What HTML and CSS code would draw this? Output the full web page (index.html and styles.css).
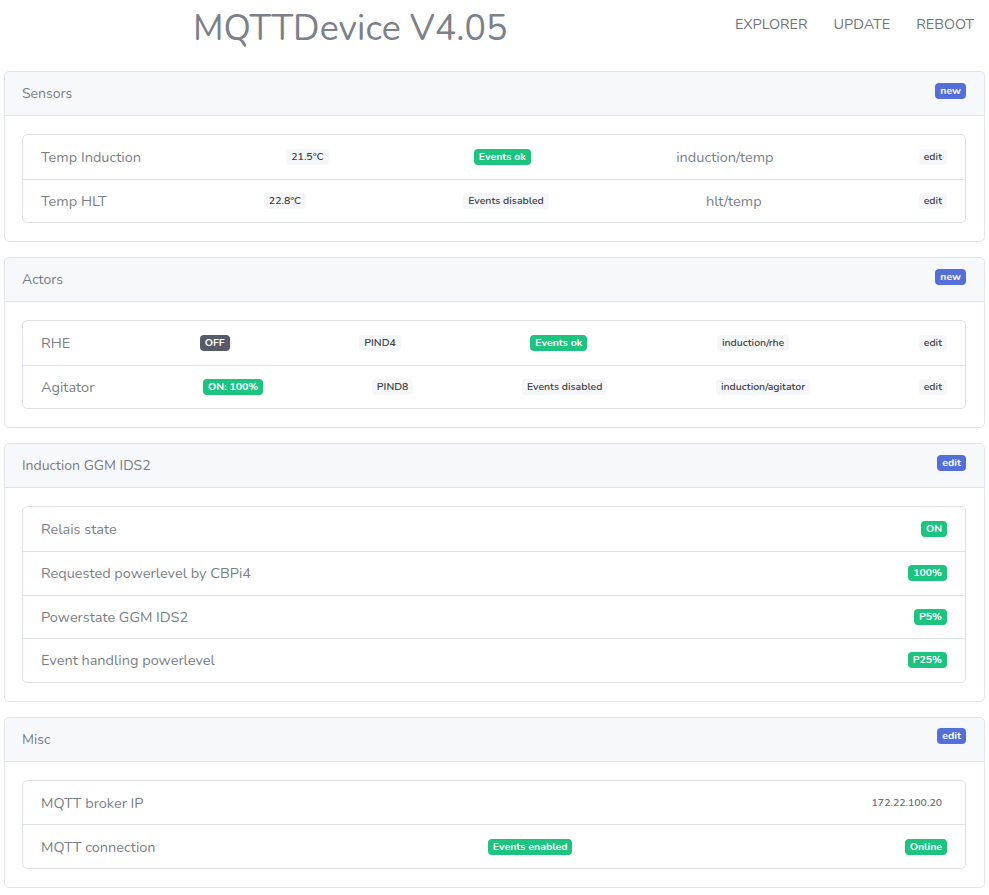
FILE: index.html
```html
<!DOCTYPE html>
<html lang="en">
<head>
<meta charset="utf-8">
<title>MQTTDevice</title>
<link rel="stylesheet" href="styles.css">
</head>
<body>
<header class="topbar">
  <h1 class="brand">MQTTDevice V4.05</h1>
  <nav class="nav">
    <a href="#">EXPLORER</a>
    <a href="#">UPDATE</a>
    <a href="#">REBOOT</a>
  </nav>
</header>

<main class="main">
  <section class="card">
    <div class="card-header"><span>Sensors</span><span class="badge b-primary">new</span></div>
    <div class="card-body">
      <ul class="list">
        <li class="row spread"><span class="label">Temp Induction</span><span class="badge b-light">21.5°C</span><span class="badge b-success">Events ok</span><span class="label">induction/temp</span><span class="badge b-light">edit</span></li>
        <li class="row spread"><span class="label">Temp HLT</span><span class="badge b-light">22.8°C</span><span class="badge b-light">Events disabled</span><span class="label">hlt/temp</span><span class="badge b-light">edit</span></li>
      </ul>
    </div>
  </section>

  <section class="card">
    <div class="card-header"><span>Actors</span><span class="badge b-primary">new</span></div>
    <div class="card-body">
      <ul class="list">
        <li class="row spread"><span class="label">RHE</span><span class="badge b-dark">OFF</span><span class="badge b-light">PIND4</span><span class="badge b-success">Events ok</span><span class="badge b-light">induction/rhe</span><span class="badge b-light">edit</span></li>
        <li class="row spread"><span class="label">Agitator</span><span class="badge b-success">ON: 100%</span><span class="badge b-light">PIND8</span><span class="badge b-light">Events disabled</span><span class="badge b-light">induction/agitator</span><span class="badge b-light">edit</span></li>
      </ul>
    </div>
  </section>

  <section class="card">
    <div class="card-header"><span>Induction GGM IDS2</span><span class="badge b-primary">edit</span></div>
    <div class="card-body">
      <ul class="list">
        <li class="row spread"><span class="label">Relais state</span><span class="badge b-success">ON</span></li>
        <li class="row spread"><span class="label">Requested powerlevel by CBPi4</span><span class="badge b-success">100%</span></li>
        <li class="row spread"><span class="label">Powerstate GGM IDS2</span><span class="badge b-success">P5%</span></li>
        <li class="row spread"><span class="label">Event handling powerlevel</span><span class="badge b-success">P25%</span></li>
      </ul>
    </div>
  </section>

  <section class="card">
    <div class="card-header"><span>Misc</span><span class="badge b-primary">edit</span></div>
    <div class="card-body">
      <ul class="list">
        <li class="row spread"><span class="label">MQTT broker IP</span><span class="badge b-plain">172.22.100.20</span></li>
        <li class="row spread"><span class="label">MQTT connection</span><span class="badge b-success">Events enabled</span><span class="badge b-success">Online</span></li>
      </ul>
    </div>
  </section>
</main>
</body>
</html>
```

FILE: styles.css
```css
* { box-sizing: border-box; }

body {
  margin: 0;
  background: #ffffff;
  font-family: "Nunito", "Lato", "Open Sans", sans-serif;
  color: #5a6169;
}

.topbar {
  display: flex;
  align-items: center;
  justify-content: space-between;
  height: 56px;
  margin-bottom: 15px;
  padding: 0 15px 0 193px;
}

.brand {
  margin: 0;
  font-size: 35.7px;
  font-weight: 400;
  color: #7c8089;
  letter-spacing: 0.1px;
}

.nav {
  display: flex;
  gap: 26px;
  padding-bottom: 9px;
}

.nav a {
  color: #6f747c;
  text-decoration: none;
  font-size: 14.4px;
}

.main {
  display: flex;
  flex-direction: column;
  gap: 15px;
  padding: 0 4px 6px;
}

.card {
  border: 1px solid #e1e4e9;
  border-radius: 5px;
  background: #fff;
}

.card-header {
  display: flex;
  justify-content: space-between;
  align-items: center;
  height: 44px;
  padding: 0 18px 0 17px;
  background: #f7f8fb;
  border-bottom: 1px solid #e1e4e9;
  border-radius: 5px 5px 0 0;
  font-size: 14px;
  color: #777c84;
}

.card-header .badge { margin-top: -6px; }

.card-body {
  padding: 18px 18px 18px 17px;
}

.list {
  margin: 0;
  padding: 0;
  list-style: none;
  border: 1px solid #dfe2e7;
  border-radius: 5px;
}

.row {
  display: flex;
  align-items: center;
  height: 43.6px;
  padding: 0 18px;
  border-top: 1px solid #dfe2e7;
}

.row:first-child { border-top: 0; }

.spread { justify-content: space-between; }

.label {
  font-size: 14.5px;
  color: #7a7f87;
}

.badge {
  display: inline-block;
  font-size: 10.5px;
  font-weight: 700;
  line-height: 12px;
  padding: 2px 5px;
  border-radius: 4px;
  white-space: nowrap;
}

.b-primary { background: #5470d8; color: #fff; }
.b-success { background: #1dc47f; color: #fff; }
.b-dark { background: #575b66; color: #fff; }
.b-light { background: #f6f7fa; color: #3c4047; font-weight: 600; }
.b-plain { background: transparent; color: #6a6f77; font-weight: 600; }
```
